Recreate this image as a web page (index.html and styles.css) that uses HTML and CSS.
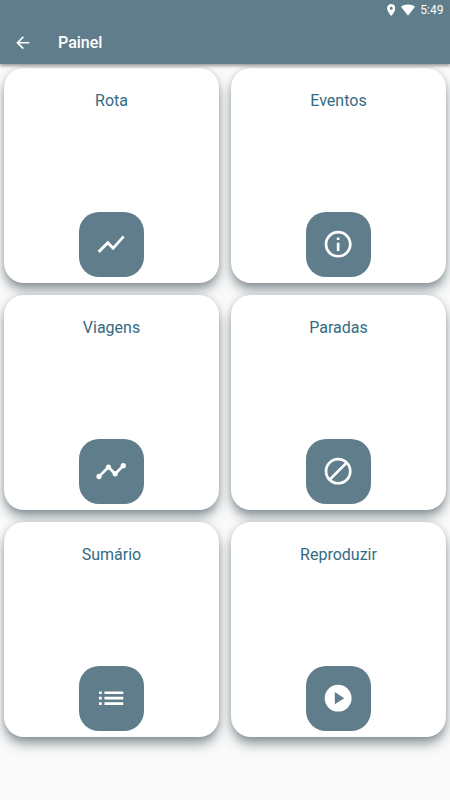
FILE: index.html
```html
<!DOCTYPE html>
<html lang="pt">
<head>
<meta charset="utf-8">
<title>Painel</title>
<link rel="stylesheet" href="styles.css">
</head>
<body>
<header class="appbar">
  <div class="status">
    <svg class="pin" viewBox="5 2 14 20"><path fill-rule="evenodd" d="M12 2C8.130 2 5 5.130 5 9c0 5.250 7 13 7 13s7-7.750 7-13c0-3.870-3.130-7-7-7zm0 9.500a2.500 2.500 0 1 1 0-5 2.500 2.500 0 0 1 0 5z"/></svg>
    <svg class="wifi" viewBox="0 0 24 20"><path d="M12 20L0 4.500C3 2 7 .5 12 .5S21 2 24 4.500z"/></svg>
    <span class="time">5:49</span>
  </div>
  <div class="toolbar">
    <svg class="back" viewBox="0 0 24 24"><path d="M20 11H7.830l5.590-5.590L12 4l-8 8 8 8 1.410-1.410L7.830 13H20v-2z"/></svg>
    <h1 class="title">Painel</h1>
  </div>
</header>
<main class="grid">
  <section class="card"><h2 class="label">Rota</h2><div class="tile"><svg viewBox="0 0 24 24"><path d="M3.500 18.490l6-6.010 4 4L22 6.920l-1.410-1.410-7.090 7.970-4-4L2 16.990z"/></svg></div></section>
  <section class="card"><h2 class="label">Eventos</h2><div class="tile"><svg viewBox="0 0 24 24"><path d="M11 7h2v2h-2zm0 4h2v6h-2zm1-9C6.480 2 2 6.480 2 12s4.480 10 10 10 10-4.480 10-10S17.520 2 12 2zm0 18c-4.410 0-8-3.590-8-8s3.590-8 8-8 8 3.590 8 8-3.590 8-8 8z"/></svg></div></section>
  <section class="card"><h2 class="label">Viagens</h2><div class="tile"><svg viewBox="0 0 24 24"><path d="M23 8c0 1.100-.9 2-2 2-.18 0-.35-.02-.51-.07l-3.560 3.550c.05.16.07.34.07.52 0 1.100-.9 2-2 2s-2-.9-2-2c0-.18.02-.36.07-.52l-2.550-2.550c-.16.05-.34.07-.52.07s-.36-.02-.52-.07l-4.550 4.560c.05.16.07.33.07.51 0 1.100-.9 2-2 2s-2-.9-2-2 .9-2 2-2c.18 0 .35.02.51.07l4.560-4.550C8.020 9.360 8 9.180 8 9c0-1.100.9-2 2-2s2 .9 2 2c0 .18-.02.36-.07.52l2.550 2.550c.16-.05.34-.07.52-.07s.36.02.52.07l3.550-3.560C19.020 8.350 19 8.180 19 8c0-1.100.9-2 2-2s2 .9 2 2z"/></svg></div></section>
  <section class="card"><h2 class="label">Paradas</h2><div class="tile"><svg viewBox="0 0 24 24"><g fill="none" stroke="#fff" stroke-width="2"><circle cx="12" cy="12" r="9"/><path d="M5.640 18.360L18.360 5.640"/></g></svg></div></section>
  <section class="card"><h2 class="label">Sumário</h2><div class="tile"><svg viewBox="0 0 24 24"><path d="M3 13h2v-2H3v2zm0 4h2v-2H3v2zm0-8h2V7H3v2zm4 4h14v-2H7v2zm0 4h14v-2H7v2zM7 7v2h14V7H7z"/></svg></div></section>
  <section class="card"><h2 class="label">Reproduzir</h2><div class="tile"><svg viewBox="0 0 24 24"><path d="M12 2C6.480 2 2 6.480 2 12s4.480 10 10 10 10-4.480 10-10S17.520 2 12 2zM9.500 16.500v-9l7 4.500-7 4.500z"/></svg></div></section>
</main>
</body>
</html>
```
FILE: styles.css
```css
* { box-sizing: border-box; margin: 0; }

body {
  height: 800px;
  overflow: hidden;
  background: #fafafa;
  font-family: Roboto, sans-serif;
}

svg { display: block; fill: #fff; }

.appbar {
  position: relative;
  z-index: 1;
  height: 64.400px;
  background: #607d8b;
  color: #fff;
  box-shadow: 0 2px 3px rgba(0, 0, 0, .3), 0 1px 5px rgba(0, 0, 0, .15);
}

.status {
  display: flex;
  align-items: center;
  justify-content: flex-end;
  height: 20px;
  padding-right: 6.500px;
}

.pin { width: 8.500px; height: 12px; margin-right: 6px; }
.wifi { width: 14px; height: 12px; margin-right: 5px; }
.time { font-size: 12px; line-height: 20px; }

.toolbar {
  display: flex;
  align-items: center;
  height: 45px;
  padding-left: 12.500px;
}

.back { width: 19.500px; height: 19.500px; margin-right: 26px; }
.title { font-size: 16px; font-weight: 500; line-height: 20px; }

.grid {
  display: grid;
  grid-template-columns: 215px 215px;
  grid-auto-rows: 215px;
  gap: 12px;
  padding: 4px;
}

.card {
  display: flex;
  flex-direction: column;
  align-items: center;
  justify-content: space-between;
  padding: 22.800px 0 6.500px;
  border-radius: 20px;
  background: #fff;
  box-shadow: 0 8px 12px -1px rgba(45, 66, 74, .5), 0 1px 6px rgba(55, 71, 79, .22);
}

.label {
  color: #336b82;
  font-size: 16px;
  font-weight: 400;
  line-height: 20px;
}

.tile {
  display: grid;
  place-items: center;
  width: 64.500px;
  height: 64.500px;
  border-radius: 20px;
  background: #607d8b;
}

.tile svg { width: 32.300px; height: 32.300px; }
```
